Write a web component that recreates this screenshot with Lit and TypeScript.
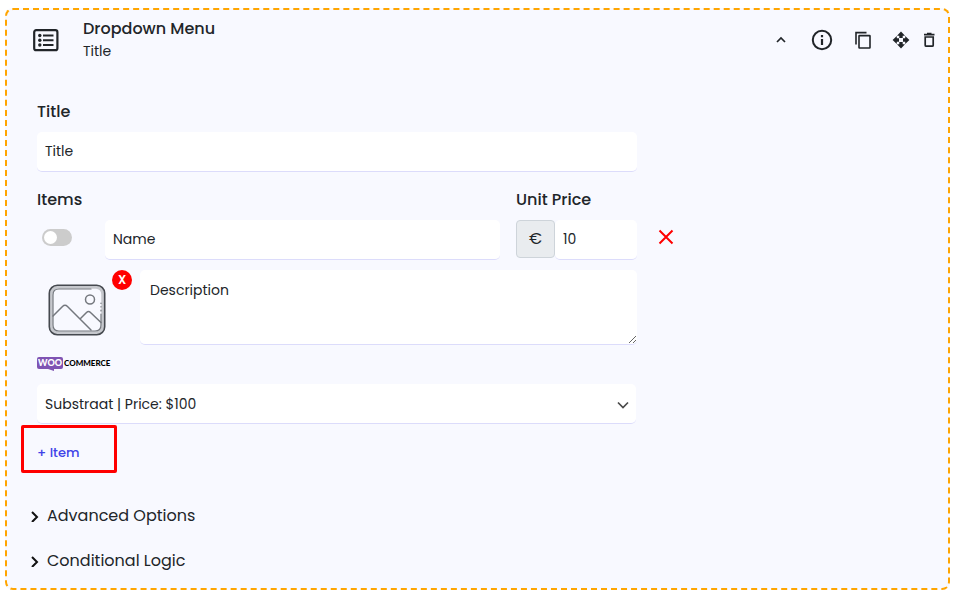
import { LitElement, html, css } from "lit";
import { customElement, state } from "lit/decorators.js";

@customElement("app-root")
export class AppRoot extends LitElement {
  @state() private enabled = false;

  static styles = css`
    :host {
      display: block;
      padding: 8px 10px 8px 5px;
      background: #fff;
      color: #212529;
      font-family: Poppins, Inter, "Open Sans", sans-serif;
      font-size: 14px;
      line-height: 24px;
    }
    * { box-sizing: border-box; }
    button {
      padding: 0;
      border: 0;
      background: none;
      color: inherit;
      font: inherit;
      cursor: pointer;
    }
    svg { display: block; }
    .card {
      border: 2px dashed #ffa500;
      border-radius: 8px;
      background: #f8f9ff;
    }
    .header {
      display: flex;
      align-items: center;
      height: 60px;
      padding: 0 12px 0 26px;
    }
    .heading { flex: 1; margin-left: 24px; }
    h2, p { margin: 0; font-size: 16px; font-weight: 500; line-height: 22px; }
    p { font-size: 14px; font-weight: 400; }
    .actions {
      display: grid;
      grid-template-columns: 36px 43px 38px 30px 14px;
      align-items: center;
      justify-items: start;
    }
    .body { padding: 30px 30px 0; }
    .label { display: block; font-size: 16px; font-weight: 500; }
    .block { max-width: 600px; }
    .field {
      display: block;
      width: 100%;
      min-width: 0;
      height: 40px;
      margin: 0;
      padding: 0 8px;
      border: 0;
      border-bottom: 1px solid #dcdcfb;
      border-radius: 5px;
      outline: 0;
      background: #fff;
      color: #212529;
      font: inherit;
    }
    .block .field { margin-top: 8px; }
    .columns {
      display: grid;
      grid-template-columns: 52px minmax(0, 1fr) 121px;
      column-gap: 16px;
      flex: 0 1 600px;
    }
    .titles { max-width: 600px; margin: 16px 0 8px; }
    .titles .label:first-child { grid-column: span 2; }
    .item { display: flex; gap: 21px; margin-bottom: 10px; }
    .remove { align-self: flex-start; margin-top: 9px; }
    .toggle {
      appearance: none;
      width: 30px;
      height: 17px;
      margin: 9px 5px;
      padding: 2px;
      border-radius: 9px;
      background: #ccc;
      cursor: pointer;
    }
    .toggle::before {
      content: "";
      display: block;
      width: 13px;
      height: 13px;
      border-radius: 50%;
      background: #fff;
    }
    .toggle:checked { background: #3f43e8; }
    .toggle:checked::before { margin-left: 13px; }
    .price { display: flex; }
    .currency {
      flex: 0 0 39px;
      height: 38px;
      border: 1px solid #ced4da;
      border-radius: 4px;
      background: #e9ecef;
      font-size: 16px;
      line-height: 36px;
      text-align: center;
    }
    .details { display: flex; max-width: 600px; }
    .thumb { position: relative; flex: 0 0 103px; padding: 14px 0 0 11px; }
    .clear {
      position: absolute;
      top: 0;
      right: 8px;
      width: 20px;
      height: 20px;
      border-radius: 50%;
      background: #f00;
      color: #fff;
      font-size: 12px;
      font-weight: 600;
      line-height: 20px;
    }
    .description {
      height: 75px;
      padding: 8px 10px;
      line-height: 24px;
      resize: vertical;
    }
    .woo {
      display: flex;
      gap: 1px;
      margin-top: 12px;
      height: 14px;
      color: #000;
      font-family: Lato, sans-serif;
      font-size: 8px;
      font-weight: 900;
      line-height: 13px;
    }
    .bubble {
      position: relative;
      width: 26px;
      height: 12px;
      border-radius: 2px;
      background: #7f54b3;
      color: #fff;
      font-size: 9px;
      line-height: 12px;
      text-align: center;
    }
    .bubble::after {
      content: "";
      position: absolute;
      top: 12px;
      left: 11px;
      border: 3px solid transparent;
      border-width: 2px 0 0 6px;
      border-top-color: #7f54b3;
    }
    .select { position: relative; max-width: 599px; margin-top: 13px; }
    .select .field { appearance: none; padding-right: 28px; }
    .select svg { position: absolute; top: 16px; right: 7px; pointer-events: none; }
    .add {
      display: block;
      width: 96px;
      height: 48px;
      margin: 1px 0 0 -16px;
      padding: 8px 0 0 13px;
      border: 3px solid #f00;
      border-radius: 2px;
      color: #3f43e8;
      font-size: 13px;
      font-weight: 500;
      text-align: left;
    }
    .sections { display: grid; gap: 21px; padding: 31px 22px 15px; }
    .section {
      display: flex;
      align-items: center;
      gap: 6px;
      justify-self: start;
      font-size: 16px;
    }
  `;

  render() {
    return html`
      <section class="card">
        <header class="header">
          <svg width="26" height="24" viewBox="0 0 26 24" fill="none" stroke="#212529" stroke-width="2">
            <rect x="1.2" y="2.2" width="23.2" height="20" rx="2" stroke-width="2.2" />
            <path d="M10 7.5h10.5M10 12.2h10.5M10 17h10.5" stroke-width="2" />
            <g fill="#212529" stroke="none">
              <circle cx="6.8" cy="7.5" r="1.7" /><circle cx="6.8" cy="12.2" r="1.7" /><circle cx="6.8" cy="17" r="1.7" />
            </g>
          </svg>
          <div class="heading">
            <h2>Dropdown Menu</h2>
            <p>Title</p>
          </div>
          <div class="actions">
            <button aria-label="Collapse">
              <svg width="12" height="12" viewBox="0 0 12 12" fill="none" stroke="#212529" stroke-width="1.7"><path d="M2 8l4-4 4 4" /></svg>
            </button>
            <button aria-label="Information">
              <svg width="22" height="22" viewBox="0 0 22 22" fill="none" stroke="#212529" stroke-width="2">
                <circle cx="11" cy="11" r="9.2" /><path d="M11 10v6M11 6v2.2" stroke-width="2.2" />
              </svg>
            </button>
            <button aria-label="Duplicate">
              <svg width="18" height="18" viewBox="0 0 18 18" fill="none" stroke="#212529" stroke-width="1.6">
                <path d="M2 13.5V1.6h10.5" /><rect x="5" y="4.6" width="11" height="12.4" rx=".5" />
              </svg>
            </button>
            <button aria-label="Move">
              <svg width="18" height="18" viewBox="0 0 18 18" fill="#212529">
                <path d="M9 .6l4 4.200H10.700V7H7.300V4.800H5zM9 17.400l4-4.200H10.700V11H7.300v2.200H5zM.6 9l4.200-4V7.300H7v3.400H4.800V13zM17.400 9l-4.200-4V7.300H11v3.400h2.200V13z" />
              </svg>
            </button>
            <button aria-label="Delete">
              <svg width="14" height="16" viewBox="0 0 14 16" fill="none" stroke="#212529" stroke-width="1.7">
                <path d="M2 2.600h10.500M5 1.700h4.500" /><path d="M3.200 5h8v8.200q0 1-1 1H4.200q-1 0-1-1z" />
              </svg>
            </button>
          </div>
        </header>

        <div class="body">
          <div class="block">
            <label class="label" for="title">Title</label>
            <input class="field" id="title" type="text" value="Title" />
          </div>

          <div class="columns titles">
            <label class="label" for="name">Items</label>
            <label class="label" for="price">Unit Price</label>
          </div>

          <div class="item">
            <div class="columns">
              <input
                class="toggle"
                type="checkbox"
                aria-label="Enable item"
                .checked=${this.enabled}
                @change=${() => (this.enabled = !this.enabled)}
              />
              <input class="field" id="name" type="text" value="Name" />
              <div class="price">
                <span class="currency">€</span>
                <input class="field" id="price" type="text" value="10" />
              </div>
            </div>
            <button class="remove" aria-label="Remove item">
              <svg width="16" height="16" viewBox="0 0 16 16" stroke="#f00" stroke-width="2"><path d="M1.500 1.500l13 13M14.500 1.500l-13 13" /></svg>
            </button>
          </div>

          <div class="details">
            <div class="thumb">
              <svg width="58" height="52" viewBox="0 0 58 52" fill="none" stroke="#74787e" stroke-linecap="round">
                <rect x="3" y="3" width="52" height="46" rx="7" stroke="#c6c8cd" stroke-width="3.500" />
                <rect x="1.300" y="1.300" width="55.400" height="49.400" rx="8" stroke="#45494f" stroke-width="1.600" />
                <path d="M43 5H11q-6 0-6 6v30q0 6 6 6h36q6 0 6-6V30M53 26v1M53 22.500v.5M53 19v.5" stroke-width="1.200" />
                <circle cx="42" cy="15.500" r="4.500" stroke-width="1.500" />
                <path d="M5 32l9.500-9.500q2.500-2.500 5 0L43 46M32 35l6.500-6.500q2-2 4 0L53 38.500" stroke-width="1.500" />
              </svg>
              <button class="clear" aria-label="Remove image">X</button>
            </div>
            <textarea class="field description" aria-label="Description">Description</textarea>
          </div>

          <div class="woo"><span class="bubble">WOO</span><span>COMMERCE</span></div>

          <div class="select">
            <select class="field" aria-label="Product">
              <option>Substraat | Price: $100</option>
            </select>
            <svg width="12" height="10" viewBox="0 0 12 10" fill="none" stroke="#4a4a4a" stroke-width="1.700"><path d="M1 2.500l5 5 5-5" /></svg>
          </div>

          <button class="add">+ Item</button>
        </div>

        <div class="sections">
          ${["Advanced Options", "Conditional Logic"].map(
            (name) => html`
              <button class="section" aria-expanded="false">
                <svg width="12" height="12" viewBox="0 0 12 12" fill="none" stroke="#111" stroke-width="2"><path d="M3 2l5 5-5 5" /></svg>
                ${name}
              </button>
            `
          )}
        </div>
      </section>
    `;
  }
}
